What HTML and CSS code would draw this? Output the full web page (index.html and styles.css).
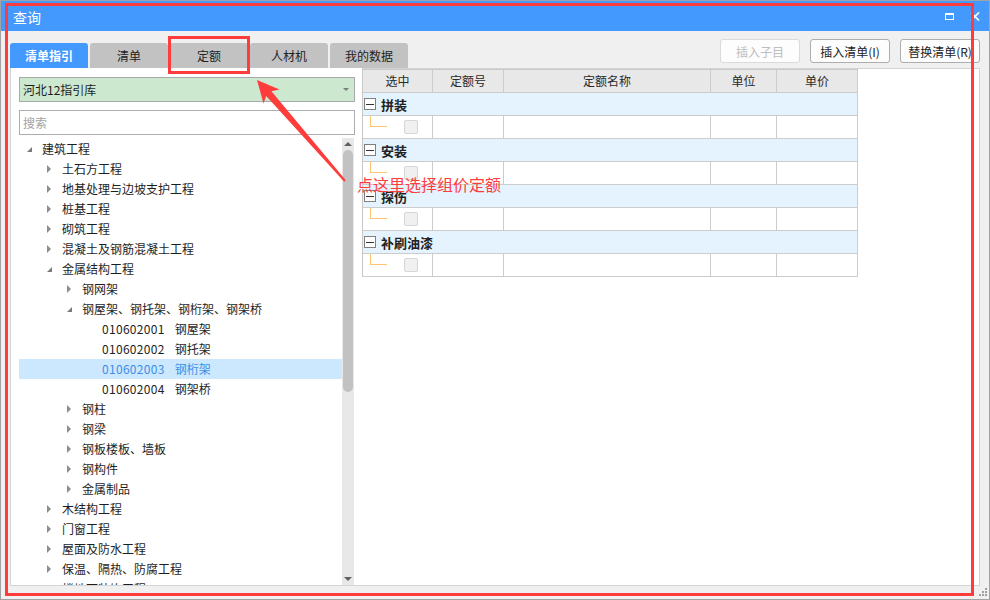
FILE: index.html
```html
<!DOCTYPE html>
<html lang="zh-CN">
<head>
<meta charset="utf-8">
<title>查询</title>
<link rel="stylesheet" href="styles.css">
</head>
<body>
<div class="window">
  <div class="titlebar">
    <span class="title">查询</span>
    <div class="win-controls">
      <span class="btn-max"></span>
      <svg class="btn-close" width="10" height="9" viewBox="0 0 10 9"><path d="M1 0.5L9 8.5M9 0.5L1 8.5" stroke="#fff" stroke-width="1.7"/></svg>
    </div>
  </div>
  <div class="main">
    <div class="toolbar">
      <div class="tabs">
        <div class="tab active">清单指引</div>
        <div class="tab">清单</div>
        <div class="tab">定额</div>
        <div class="tab">人材机</div>
        <div class="tab">我的数据</div>
      </div>
      <div class="actions">
        <button class="btn disabled">插入子目</button>
        <button class="btn">插入清单(I)</button>
        <button class="btn">替换清单(R)</button>
      </div>
    </div>
    <div class="content">
      <div class="left">
        <div class="select"><span>河北12指引库</span><span class="caret"></span></div>
        <div class="search">搜索</div>
        <div class="tree-wrap">
          <ul class="tree">
            <li class="node lv0"><i class="tw open"></i><span>建筑工程</span></li>
            <li class="node lv1"><i class="tw closed"></i><span>土石方工程</span></li>
            <li class="node lv1"><i class="tw closed"></i><span>地基处理与边坡支护工程</span></li>
            <li class="node lv1"><i class="tw closed"></i><span>桩基工程</span></li>
            <li class="node lv1"><i class="tw closed"></i><span>砌筑工程</span></li>
            <li class="node lv1"><i class="tw closed"></i><span>混凝土及钢筋混凝土工程</span></li>
            <li class="node lv1"><i class="tw open"></i><span>金属结构工程</span></li>
            <li class="node lv2"><i class="tw closed"></i><span>钢网架</span></li>
            <li class="node lv2"><i class="tw open"></i><span>钢屋架、钢托架、钢桁架、钢架桥</span></li>
            <li class="node lv3"><i class="tw"></i><span class="code">010602001</span><span>钢屋架</span></li>
            <li class="node lv3"><i class="tw"></i><span class="code">010602002</span><span>钢托架</span></li>
            <li class="node lv3 selected"><i class="tw"></i><span class="code">010602003</span><span>钢桁架</span></li>
            <li class="node lv3"><i class="tw"></i><span class="code">010602004</span><span>钢架桥</span></li>
            <li class="node lv2"><i class="tw closed"></i><span>钢柱</span></li>
            <li class="node lv2"><i class="tw closed"></i><span>钢梁</span></li>
            <li class="node lv2"><i class="tw closed"></i><span>钢板楼板、墙板</span></li>
            <li class="node lv2"><i class="tw closed"></i><span>钢构件</span></li>
            <li class="node lv2"><i class="tw closed"></i><span>金属制品</span></li>
            <li class="node lv1"><i class="tw closed"></i><span>木结构工程</span></li>
            <li class="node lv1"><i class="tw closed"></i><span>门窗工程</span></li>
            <li class="node lv1"><i class="tw closed"></i><span>屋面及防水工程</span></li>
            <li class="node lv1"><i class="tw closed"></i><span>保温、隔热、防腐工程</span></li>
            <li class="node lv1"><i class="tw closed"></i><span>楼地面装饰工程</span></li>
          </ul>
          <div class="scrollbar">
            <div class="sb-arrow up"></div>
            <div class="sb-thumb"></div>
            <div class="sb-space"></div>
            <div class="sb-arrow down"></div>
          </div>
        </div>
      </div>
      <div class="right">
        <div class="grid">
          <div class="hd">选中</div>
          <div class="hd">定额号</div>
          <div class="hd">定额名称</div>
          <div class="hd">单位</div>
          <div class="hd">单价</div>

          <div class="group"><span class="minus"></span><b>拼装</b></div>
          <div class="cell sel"><span class="branch"></span><span class="chk"></span></div>
          <div class="cell"></div><div class="cell"></div><div class="cell"></div><div class="cell"></div>

          <div class="group"><span class="minus"></span><b>安装</b></div>
          <div class="cell sel"><span class="branch"></span><span class="chk"></span></div>
          <div class="cell"></div><div class="cell"></div><div class="cell"></div><div class="cell"></div>

          <div class="group"><span class="minus"></span><b>探伤</b></div>
          <div class="cell sel"><span class="branch"></span><span class="chk"></span></div>
          <div class="cell"></div><div class="cell"></div><div class="cell"></div><div class="cell"></div>

          <div class="group"><span class="minus"></span><b>补刷油漆</b></div>
          <div class="cell sel"><span class="branch"></span><span class="chk"></span></div>
          <div class="cell"></div><div class="cell"></div><div class="cell"></div><div class="cell"></div>
        </div>
      </div>
    </div>
  </div>
  <svg class="grip" width="9" height="9" viewBox="0 0 9 9">
    <rect x="6" y="0" width="2" height="2" fill="#a0a0a0"/>
    <rect x="3" y="3" width="2" height="2" fill="#a0a0a0"/>
    <rect x="6" y="3" width="2" height="2" fill="#a0a0a0"/>
    <rect x="0" y="6" width="2" height="2" fill="#a0a0a0"/>
    <rect x="3" y="6" width="2" height="2" fill="#a0a0a0"/>
    <rect x="6" y="6" width="2" height="2" fill="#a0a0a0"/>
  </svg>
  <div class="annot">
    <div class="mark-frame"></div>
    <div class="mark-tab"></div>
    <svg class="mark-arrow" width="990" height="600" viewBox="0 0 990 600">
      <polygon fill="#ff3c3c" points="257,80 279.5,89.5 271.4,91.3 345.8,180.3 344.2,181.7 266.2,95.9 263.5,103.5"/>
    </svg>
    <div class="mark-text">点这里选择组价定额</div>
  </div>
</div>
</body>
</html>
```

FILE: styles.css
```css
* { box-sizing: border-box; }
html, body { margin: 0; padding: 0; }
body {
  font-family: "Noto Sans CJK SC", "Noto Sans", sans-serif;
  font-size: 12px;
  color: #1e1e1e;
  background: #ffffff;
}

.window {
  position: relative;
  width: 990px;
  height: 600px;
  border: 1px solid #a3a3a3;
  background: #f0f0f0;
  display: flex;
  flex-direction: column;
}

/* title bar */
.titlebar {
  flex: none;
  height: 30px;
  background: #4499ff;
  color: #fff;
  display: flex;
  align-items: center;
  padding: 0 9px 0 12px;
}
.title { font-size: 14px; line-height: 16px; margin-top: 1px; }
.win-controls { margin-left: auto; display: flex; align-items: center; gap: 16px; }
.btn-max {
  width: 9px;
  height: 7px;
  border: 1px solid #fff;
  border-top-width: 2px;
}
.btn-close { display: block; }

/* main */
.main {
  flex: 1;
  display: flex;
  flex-direction: column;
  padding: 8px 9px 0 9px;
}
.toolbar {
  flex: none;
  height: 29px;
  display: flex;
  justify-content: space-between;
}
.tabs { align-self: flex-end; display: flex; gap: 2px; }
.tab {
  width: 78px;
  height: 25px;
  line-height: 25px;
  text-align: center;
  background: #c2c2c2;
  color: #222;
  border-radius: 3px 3px 0 0;
}
.tab.active { background: #4499ff; color: #fff; font-weight: bold; }

.actions { align-self: flex-start; display: flex; gap: 10px; }
.btn {
  width: 80px;
  height: 24px;
  padding: 0;
  border: 1px solid #adadad;
  border-radius: 3px;
  background: #fdfdfd;
  font-family: inherit;
  font-size: 12px;
  color: #222;
}
.btn.disabled { border-color: #dadada; color: #bdbdbd; }

.content {
  flex: none;
  height: 518px;
  display: flex;
}

/* left panel */
.left {
  width: 352px;
  background: #fff;
  border-left: 1px solid #d4d4d4;
  border-bottom: 1px solid #d4d4d4;
  padding: 9px 7px 0 8px;
  display: flex;
  flex-direction: column;
}
.select {
  flex: none;
  height: 25px;
  border: 1px solid #a9a9a9;
  background: #cce8cf;
  display: flex;
  align-items: center;
  padding-left: 3px;
  color: #1e1e1e;
}
.caret {
  margin-left: auto;
  margin-right: 5px;
  border-left: 3px solid transparent;
  border-right: 3px solid transparent;
  border-top: 3px solid #7d7d7d;
}
.search {
  flex: none;
  margin-top: 8px;
  height: 25px;
  line-height: 23px;
  border: 1px solid #abadb3;
  color: #a3a3a3;
  padding-left: 3px;
}
.tree-wrap {
  flex: 1;
  min-height: 0;
  margin-top: 3px;
  margin-right: 1px;
  display: flex;
  overflow: hidden;
}
.tree {
  flex: 1;
  list-style: none;
  margin: 0;
  padding: 1px 0 0 0;
  overflow: hidden;
}
.node {
  height: 20px;
  display: flex;
  align-items: center;
  white-space: nowrap;
  line-height: 20px;
}
.lv1 { padding-left: 20px; }
.lv2 { padding-left: 40px; }
.lv3 { padding-left: 60px; }
.node.selected { background: #cce8ff; color: #3c8ee8; }
.tw {
  flex: none;
  width: 23px;
  height: 20px;
  display: flex;
  align-items: center;
  padding-left: 8px;
}
.tw.open::before {
  content: "";
  border-left: 5px solid transparent;
  border-bottom: 5px solid #7a7a7a;
  margin-top: 1px;
}
.tw.closed::before {
  content: "";
  border-top: 4px solid transparent;
  border-bottom: 4px solid transparent;
  border-left: 4px solid #8c8c8c;
}
.code { margin-right: 10px; letter-spacing: 0.3px; }

.scrollbar {
  flex: none;
  width: 12px;
  background: #e8e8e8;
  display: flex;
  flex-direction: column;
  align-items: center;
}
.sb-arrow { flex: none; height: 12px; display: flex; align-items: center; justify-content: center; }
.sb-arrow.up::before {
  content: "";
  border-left: 4px solid transparent;
  border-right: 4px solid transparent;
  border-bottom: 4px solid #606060;
}
.sb-arrow.down::before {
  content: "";
  border-left: 4px solid transparent;
  border-right: 4px solid transparent;
  border-top: 4px solid #606060;
}
.sb-thumb {
  flex: none;
  width: 10px;
  height: 242px;
  border-radius: 5px;
  background: #c2c2c2;
}
.sb-space { flex: 1; }

/* right panel */
.right {
  flex: 1;
  background: #fff;
  border-top: 1px solid #d4d4d4;
  border-right: 1px solid #d4d4d4;
  border-bottom: 1px solid #d4d4d4;
}
.grid {
  display: grid;
  grid-template-columns: 70px 71px 207px 66px 81px;
  width: max-content;
  border-left: 1px solid #c8c8c8;
  border-top: 1px solid #c8c8c8;
}
.hd, .cell, .group {
  height: 23px;
  border-right: 1px solid #cccccc;
  border-bottom: 1px solid #cccccc;
}
.hd {
  background: #e8e8e8;
  text-align: center;
  line-height: 22px;
  color: #2a2a2a;
}
.group {
  grid-column: 1 / -1;
  background: #e5f3ff;
  display: flex;
  align-items: center;
  padding-left: 1px;
}
.group b { font-size: 13px; margin-left: 5px; color: #222; }
.minus {
  width: 12px;
  height: 12px;
  border: 1px solid #7f7f7f;
  background: #fff;
  display: flex;
  align-items: center;
  justify-content: center;
}
.minus::before { content: ""; width: 8px; height: 1px; background: #333; }
.cell.sel { display: flex; align-items: flex-start; }
.branch {
  margin-left: 7px;
  width: 17px;
  height: 11px;
  border-left: 1px solid #ffc470;
  border-bottom: 1px solid #ffc470;
}
.chk {
  margin-left: 17px;
  margin-top: 4px;
  width: 14px;
  height: 14px;
  background: #f0f0f0;
  border: 1px solid #d6d6d6;
  border-radius: 2px;
}

/* resize grip */
.grip { position: absolute; right: 1px; bottom: 2px; }

/* annotations */
.annot {
  position: absolute;
  left: -1px;
  top: -1px;
  width: 990px;
  height: 600px;
  pointer-events: none;
}
.mark-frame {
  position: absolute;
  left: 5px;
  top: 3px;
  width: 969px;
  height: 593px;
  border: 3px solid #ff3c3c;
}
.mark-tab {
  position: absolute;
  left: 168px;
  top: 36px;
  width: 82px;
  height: 38px;
  border: 3px solid #ff3c3c;
}
.mark-arrow { position: absolute; left: 0; top: 0; }
.mark-text {
  position: absolute;
  left: 357px;
  top: 174px;
  font-size: 16px;
  line-height: 20px;
  color: #ff3c3c;
  white-space: nowrap;
}
```
